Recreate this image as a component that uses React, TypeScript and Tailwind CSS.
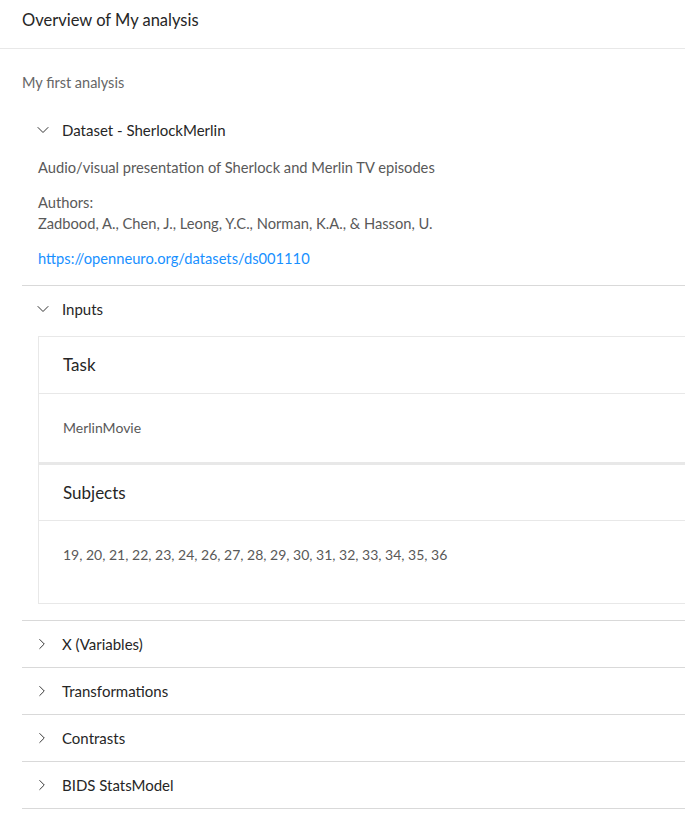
import { ChevronDown, ChevronRight } from "lucide-react";

const closedPanels = ["X (Variables)", "Transformations", "Contrasts", "BIDS StatsModel"];

function PanelHeader({ open, label }: { open: boolean; label: string }) {
  return (
    <div className="relative flex h-[46px] items-center pl-10 text-[15px] text-[#262626]">
      <span className="absolute left-[11px] top-1/2 -translate-y-1/2 text-[#333]">
        {open ? <ChevronDown size={20} strokeWidth={1.2} /> : <ChevronRight size={18} strokeWidth={1.3} />}
      </span>
      {label}
    </div>
  );
}

export default function App() {
  return (
    <div className="min-h-screen bg-white font-['Lato',sans-serif] text-[#595959]">
      {/* Title bar */}
      <div className="h-[49px] border-b border-[#e8e8e8] px-[22px] pt-[9px]">
        <h1 className="text-[16.5px] leading-[22px] text-[#262626]">Overview of My analysis</h1>
      </div>

      <div className="pl-[22px]">
        <p className="mt-[23px] text-[14.5px] text-[#666]">My first analysis</p>

        <div className="mt-[13px]">
          {/* Dataset */}
          <div className="border-b border-[#d9d9d9]">
            <PanelHeader open label="Dataset - SherlockMerlin" />
            <div className="px-4 pb-[16px] text-[14.7px] leading-[21px]">
              <p className="mt-[4px]">Audio/visual presentation of Sherlock and Merlin TV episodes</p>
              <p className="mt-[14px]">Authors:</p>
              <p>Zadbood, A., Chen, J., Leong, Y.C., Norman, K.A., &amp; Hasson, U.</p>
              <a href="#" className="mt-[14px] block text-[#1890ff]">https://openneuro.org/datasets/ds001110</a>
            </div>
          </div>

          {/* Inputs */}
          <div className="border-b border-[#d9d9d9]">
            <PanelHeader open label="Inputs" />
            <div className="pb-[16px] pl-4 pt-[4px]">
              <div className="border border-r-0 border-[#e8e8e8]">
                <div className="flex h-[57px] items-center border-b border-[#e8e8e8] px-6 text-[17px] text-[#262626]">Task</div>
                <div className="flex h-[68px] items-center px-6 text-[14px]">MerlinMovie</div>
              </div>
              <div className="border border-t-2 border-r-0 border-[#e8e8e8]">
                <div className="flex h-[56px] items-center border-b border-[#e8e8e8] px-6 text-[17px] text-[#262626]">Subjects</div>
                <div className="h-[82px] px-6 pt-[23px] text-[14px]">
                  19, 20, 21, 22, 23, 24, 26, 27, 28, 29, 30, 31, 32, 33, 34, 35, 36
                </div>
              </div>
            </div>
          </div>

          {closedPanels.map((p) => (
            <div key={p} className="border-b border-[#d9d9d9]">
              <PanelHeader open={false} label={p} />
            </div>
          ))}
        </div>
      </div>
    </div>
  );
}
